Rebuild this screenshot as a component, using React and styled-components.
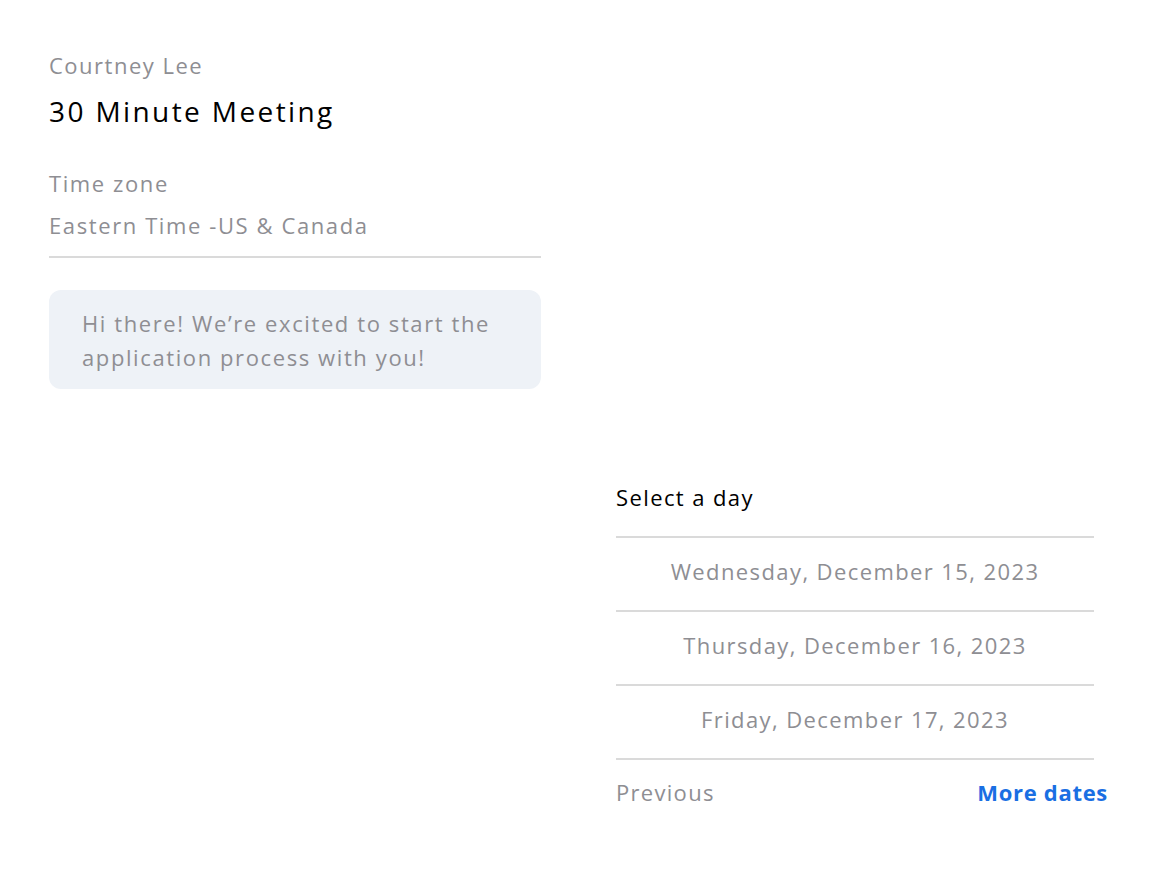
import React from "react";
import styled, { createGlobalStyle } from "styled-components";

const GlobalStyle = createGlobalStyle`
  html, body {
    margin: 0;
    padding: 0;
    background: #ffffff;
  }
  body {
    font-family: "Open Sans", "Liberation Sans", sans-serif;
    -webkit-font-smoothing: antialiased;
  }
`;

const Page = styled.div`
  display: grid;
  grid-template-columns: 492px 492px;
  column-gap: 75px;
  padding: 52px 0 0 49px;
  align-items: start;
`;

const Info = styled.section`
  display: flex;
  flex-direction: column;
`;

const Host = styled.div`
  font-size: 22px;
  line-height: 26px;
  letter-spacing: 1.5px;
  color: #8e8e93;
`;

const Title = styled.h1`
  margin: 15px 0 0;
  font-size: 28px;
  line-height: 36px;
  font-weight: 500;
  letter-spacing: 2.4px;
  color: #000000;
`;

const Label = styled.div`
  margin-top: ${(p) => p.$gap || 0}px;
  font-size: 22px;
  line-height: 26px;
  letter-spacing: 1.6px;
  color: #8e8e93;
`;

const Zone = styled(Label)`
  padding-bottom: 18px;
  border-bottom: 2px solid #dadada;
`;

const Note = styled.p`
  margin: 32px 0 0;
  padding: 16px 33px 15px;
  background: #eef2f7;
  border-radius: 12px;
  font-size: 22px;
  line-height: 34px;
  letter-spacing: 1.6px;
  color: #8e8e93;
`;

const Picker = styled.section`
  display: flex;
  flex-direction: column;
  margin-top: 432px;
`;

const Heading = styled.div`
  font-size: 22px;
  line-height: 26px;
  letter-spacing: 1.4px;
  color: #000000;
  padding-bottom: 26px;
  margin-right: 14px;
  border-bottom: 2px solid #dadada;
`;

const Day = styled.button`
  display: block;
  width: calc(100% - 14px);
  height: 74px;
  padding: 0 0 6px;
  border: none;
  border-bottom: 2px solid #dadada;
  background: none;
  font-family: inherit;
  font-size: 22px;
  letter-spacing: 1.4px;
  color: #8e8e93;
  text-align: center;
  cursor: pointer;
`;

const Footer = styled.div`
  box-sizing: border-box;
  display: flex;
  justify-content: space-between;
  align-items: center;
  height: 70px;
  padding-bottom: 6px;
`;

const NavLink = styled.a`
  font-size: 22px;
  line-height: 26px;
  font-weight: ${(p) => (p.$primary ? 700 : 400)};
  letter-spacing: ${(p) => (p.$primary ? 0.7 : 1.3)}px;
  color: ${(p) => (p.$primary ? "#1a6fe3" : "#8e8e93")};
  text-decoration: none;
  cursor: pointer;
`;

const days = [
  "Wednesday, December 15, 2023",
  "Thursday, December 16, 2023",
  "Friday, December 17, 2023",
];

export default function App() {
  return (
    <>
      <GlobalStyle />
      <Page>
        <Info>
          <Host>Courtney Lee</Host>
          <Title>30 Minute Meeting</Title>
          <Label $gap={41}>Time zone</Label>
          <Zone $gap={16}>Eastern Time -US &amp; Canada</Zone>
          <Note>
            Hi there! We’re excited to start the application process with you!
          </Note>
        </Info>
        <Picker>
          <Heading>Select a day</Heading>
          {days.map((d) => (
            <Day key={d}>{d}</Day>
          ))}
          <Footer>
            <NavLink>Previous</NavLink>
            <NavLink $primary>More dates</NavLink>
          </Footer>
        </Picker>
      </Page>
    </>
  );
}
